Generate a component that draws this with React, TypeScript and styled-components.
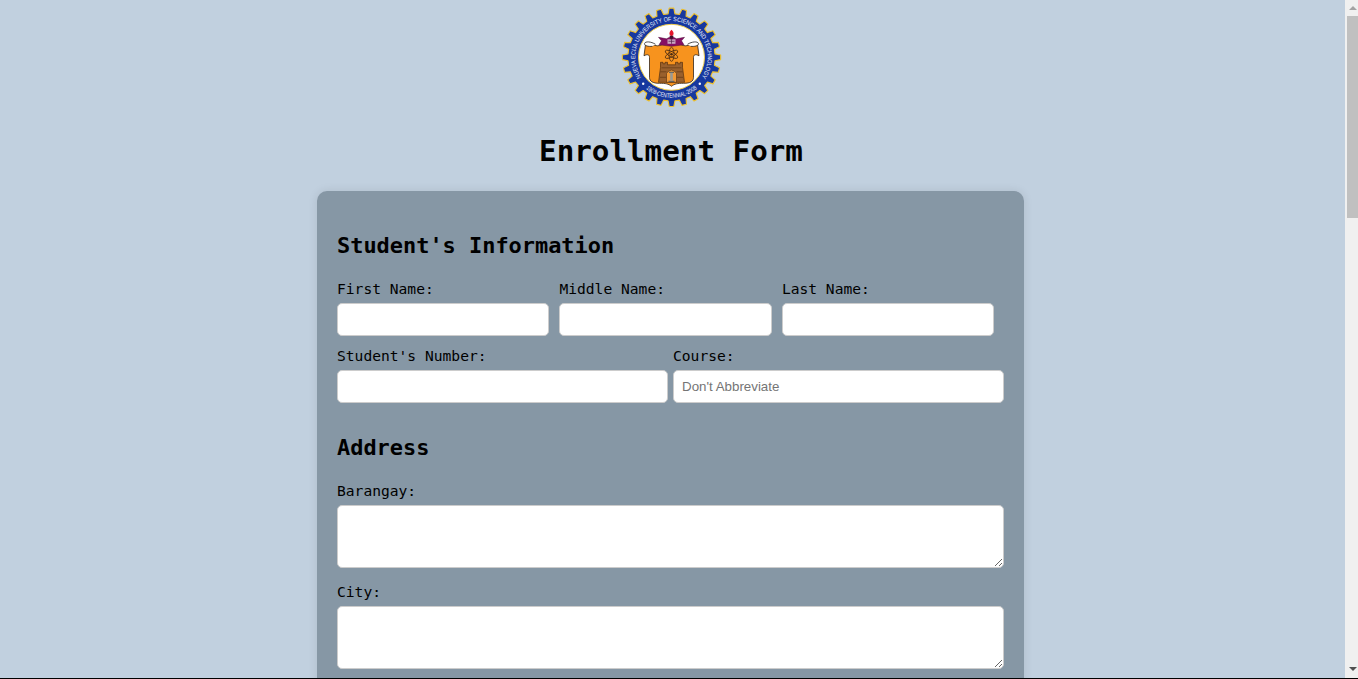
import React from "react";
import styled, { createGlobalStyle } from "styled-components";

const GlobalStyle = createGlobalStyle`
  *, *::before, *::after { box-sizing: border-box; }
  body {
    margin: 0;
    overflow: hidden;
    background: #c1d0df;
    color: #000;
    font-family: "DejaVu Sans Mono", "Liberation Mono", monospace;
  }
`;

const Window = styled.div`
  display: grid;
  grid-template-columns: minmax(0, 1fr) 13px;
  height: 679px;
  border-bottom: 1px solid #000;
`;

const Page = styled.main`
  display: flex;
  flex-direction: column;
  align-items: center;
  height: 678px;
  padding: 8px 4px 0 0;
  overflow: hidden;
`;

const Logo = styled.svg`
  display: block;
  flex: none;
  width: 100px;
  height: 100px;
  margin-left: 2px;
`;

const Title = styled.h1`
  flex: none;
  margin: 25px 0 21px;
  padding-left: 1px;
  font-size: 29.23px;
  line-height: 37px;
  font-weight: 700;
`;

const Form = styled.form`
  flex: none;
  width: 707px;
  height: 900px;
  padding: 20px;
  border-radius: 10px;
  background: #8697a5;
  box-shadow: 0 0 10px rgba(0, 0, 0, 0.1);
`;

const SectionTitle = styled.h2`
  margin: 0;
  padding: 21px 0 19px;
  font-size: 21.93px;
  line-height: 28px;
  font-weight: 700;
`;

const Row = styled.div<{ $gap: number; $end?: number }>`
  display: flex;
  gap: ${(p) => p.$gap}px;
  padding-right: ${(p) => p.$end ?? 0}px;
  margin-bottom: 10px;
`;

const Field = styled.label<{ $after?: number }>`
  display: flex;
  flex: 1 1 0;
  flex-direction: column;
  gap: 5px;
  min-width: 0;
  margin-bottom: ${(p) => p.$after ?? 0}px;
  font-size: 14.62px;
  line-height: 19px;
`;

const Input = styled.input`
  width: 100%;
  height: 33px;
  padding: 8px;
  border: 1px solid #ccc;
  border-radius: 5px;
  background: #fff;
  font: 13.333px "Liberation Sans", Arial, sans-serif;

  &::placeholder { color: #757575; opacity: 1; }
`;

const TextArea = styled.textarea`
  display: block;
  width: 100%;
  height: 63px;
  padding: 8px;
  border: 1px solid #ccc;
  border-radius: 5px;
  background: #fff;
  resize: vertical;
`;

const Scrollbar = styled.div`
  display: flex;
  flex-direction: column;
  height: 678px;
  padding-left: 2px;
  background: #f0f0f0;
`;

const Arrow = styled.svg`
  display: block;
  flex: none;
  width: 11px;
  height: 16px;
`;

const Track = styled.div`
  flex: 1;
`;

const Thumb = styled.div`
  height: 202px;
  background: #c0c0c0;
`;

const TEETH = 24;

const gearPath = (root: number, tip: number) => {
  const step = (Math.PI * 2) / TEETH;
  const at = (r: number, a: number) =>
    `${(50 + r * Math.sin(a)).toFixed(2)} ${(50 - r * Math.cos(a)).toFixed(2)}`;
  const points: string[] = [];
  for (let i = 0; i < TEETH; i++) {
    const a = i * step;
    points.push(
      at(root, a - step * 0.3),
      at(tip, a - step * 0.18),
      at(tip, a + step * 0.18),
      at(root, a + step * 0.3),
    );
  }
  return `M${points.join("L")}Z`;
};

const Seal = () => (
  <Logo viewBox="0.5 0.7 100 100" overflow="visible" role="img" aria-label="University seal">
    <defs>
      <path id="arc-top" d="M31 80.800A36.200 36.200 0 1 1 69 80.800" />
      <path id="arc-bottom" d="M12 64A40.500 40.500 0 0 0 88 64" />
    </defs>
    <path d={gearPath(43.6, 49.2)} fill="#17389f" stroke="#efc02c" strokeWidth="1.1" strokeLinejoin="round" />
    <circle cx="50" cy="50" r="33" fill="#fff" stroke="#f2cf4a" strokeWidth="1" />
    <g fill="#eef2fb" fontFamily="Liberation Sans, Arial, sans-serif" fontSize="6.2" textAnchor="middle">
      <text>
        <textPath href="#arc-top" startOffset="50%" textLength="156" lengthAdjust="spacingAndGlyphs">NUEVA ECIJA UNIVERSITY OF SCIENCE AND TECHNOLOGY</textPath>
      </text>
      <text>
        <textPath href="#arc-bottom" startOffset="50%" textLength="55" lengthAdjust="spacingAndGlyphs">1908-CENTENNIAL-2008</textPath>
      </text>
    </g>
    <circle cx="21.700" cy="76.500" r="1.2" fill="#fff" />
    <circle cx="78.300" cy="76.500" r="1.2" fill="#fff" />
    <path
      d="M24 37L33 38C37 39.500 40 37.500 42 36.500H58C60 37.500 63 39.500 67 38L76 37L77.500 48.500C74 46.500 72 47.500 72 50V70C72 74 69 76 62 76C56 76 53 76.500 50 79C47 76.500 44 76 38 76C31 76 28 74 28 70V50C28 47.500 26 46.500 22.500 48.500Z"
      fill="#f7931e" stroke="#33261a" strokeWidth=".8"
    />
    <path
      d="M31 39C27 39.500 23 38.500 23 36.500C23 34 29 33.800 34 37M69 39C73 39.500 77 38.500 77 36.500C77 34 71 33.800 66 37"
      fill="#fff" stroke="#222" strokeWidth=".8"
    />
    <path d="M37 30L45 31.500L50 29L55 31.500L63 30L60 33.500L62.500 37.500L50 39L37.500 37.500L40 33.500Z" fill="#870f63" stroke="#4a0838" strokeWidth=".5" />
    <path d="M46 32H54V36.500H46Z" fill="#c9a6c0" />
    <path d="M50 32V36.500M47 34H53" stroke="#512047" strokeWidth=".7" />
    <path d="M50 22.500C53 25 52.500 28 50 29C47.500 28 47 25 50 22.500Z" fill="#e3172c" />
    <path d="M48 28.500H52L51 32H49Z" fill="#42122e" />
    <g fill="none" stroke="#4a2b12" strokeWidth=".8">
      <ellipse cx="50" cy="47" rx="7" ry="2.500" transform="rotate(30 50 47)" />
      <ellipse cx="50" cy="47" rx="7" ry="2.500" transform="rotate(-30 50 47)" />
      <ellipse cx="50" cy="47" rx="2.500" ry="7" />
    </g>
    <circle cx="50" cy="47" r="1.300" fill="#4a2b12" />
    <path
      d="M39 55H41.500V56.500H43.500V55H46V57.500H54V55H56.500V56.500H58.500V55H61V60L63 75H37L39 60Z"
      fill="#99602d" stroke="#57310f" strokeWidth=".7"
    />
    <path d="M40 60.500H60M39 64.500H45M55 64.500H61M38.500 70H45M55 70H61.500" stroke="#57310f" strokeWidth=".6" />
    <path d="M45 75V66Q50 59.500 55 66V75Z" fill="#f39a35" stroke="#4f2e12" strokeWidth=".6" />
    <path d="M47.500 65H52.500M47 74H53" stroke="#66635d" strokeWidth="1.2" />
    <path d="M50 65.500V73.500" stroke="#9a9a94" strokeWidth="2.6" />
  </Logo>
);

const TextField = ({ label, placeholder }: { label: string; placeholder?: string }) => (
  <Field>
    {label}
    <Input type="text" placeholder={placeholder} />
  </Field>
);

const AreaField = ({ label }: { label: string }) => (
  <Field $after={14}>
    {label}
    <TextArea />
  </Field>
);

export default function App() {
  return (
    <>
      <GlobalStyle />
      <Window>
        <Page>
          <Seal />
          <Title>Enrollment Form</Title>
          <Form>
            <SectionTitle>Student's Information</SectionTitle>
            <Row $gap={10.33} $end={10}>
              <TextField label="First Name:" />
              <TextField label="Middle Name:" />
              <TextField label="Last Name:" />
            </Row>
            <Row $gap={5}>
              <TextField label="Student's Number:" />
              <TextField label="Course:" placeholder="Don't Abbreviate" />
            </Row>
            <SectionTitle>Address</SectionTitle>
            <AreaField label="Barangay:" />
            <AreaField label="City:" />
          </Form>
        </Page>
        <Scrollbar>
          <Arrow viewBox="0 0 11 16">
            <path d="M2 10L6 6L10 10Z" fill="#a3a3a3" />
          </Arrow>
          <Track>
            <Thumb />
          </Track>
          <Arrow viewBox="0 0 11 16">
            <path d="M2 5L6 9L10 5Z" fill="#505050" />
          </Arrow>
        </Scrollbar>
      </Window>
    </>
  );
}
